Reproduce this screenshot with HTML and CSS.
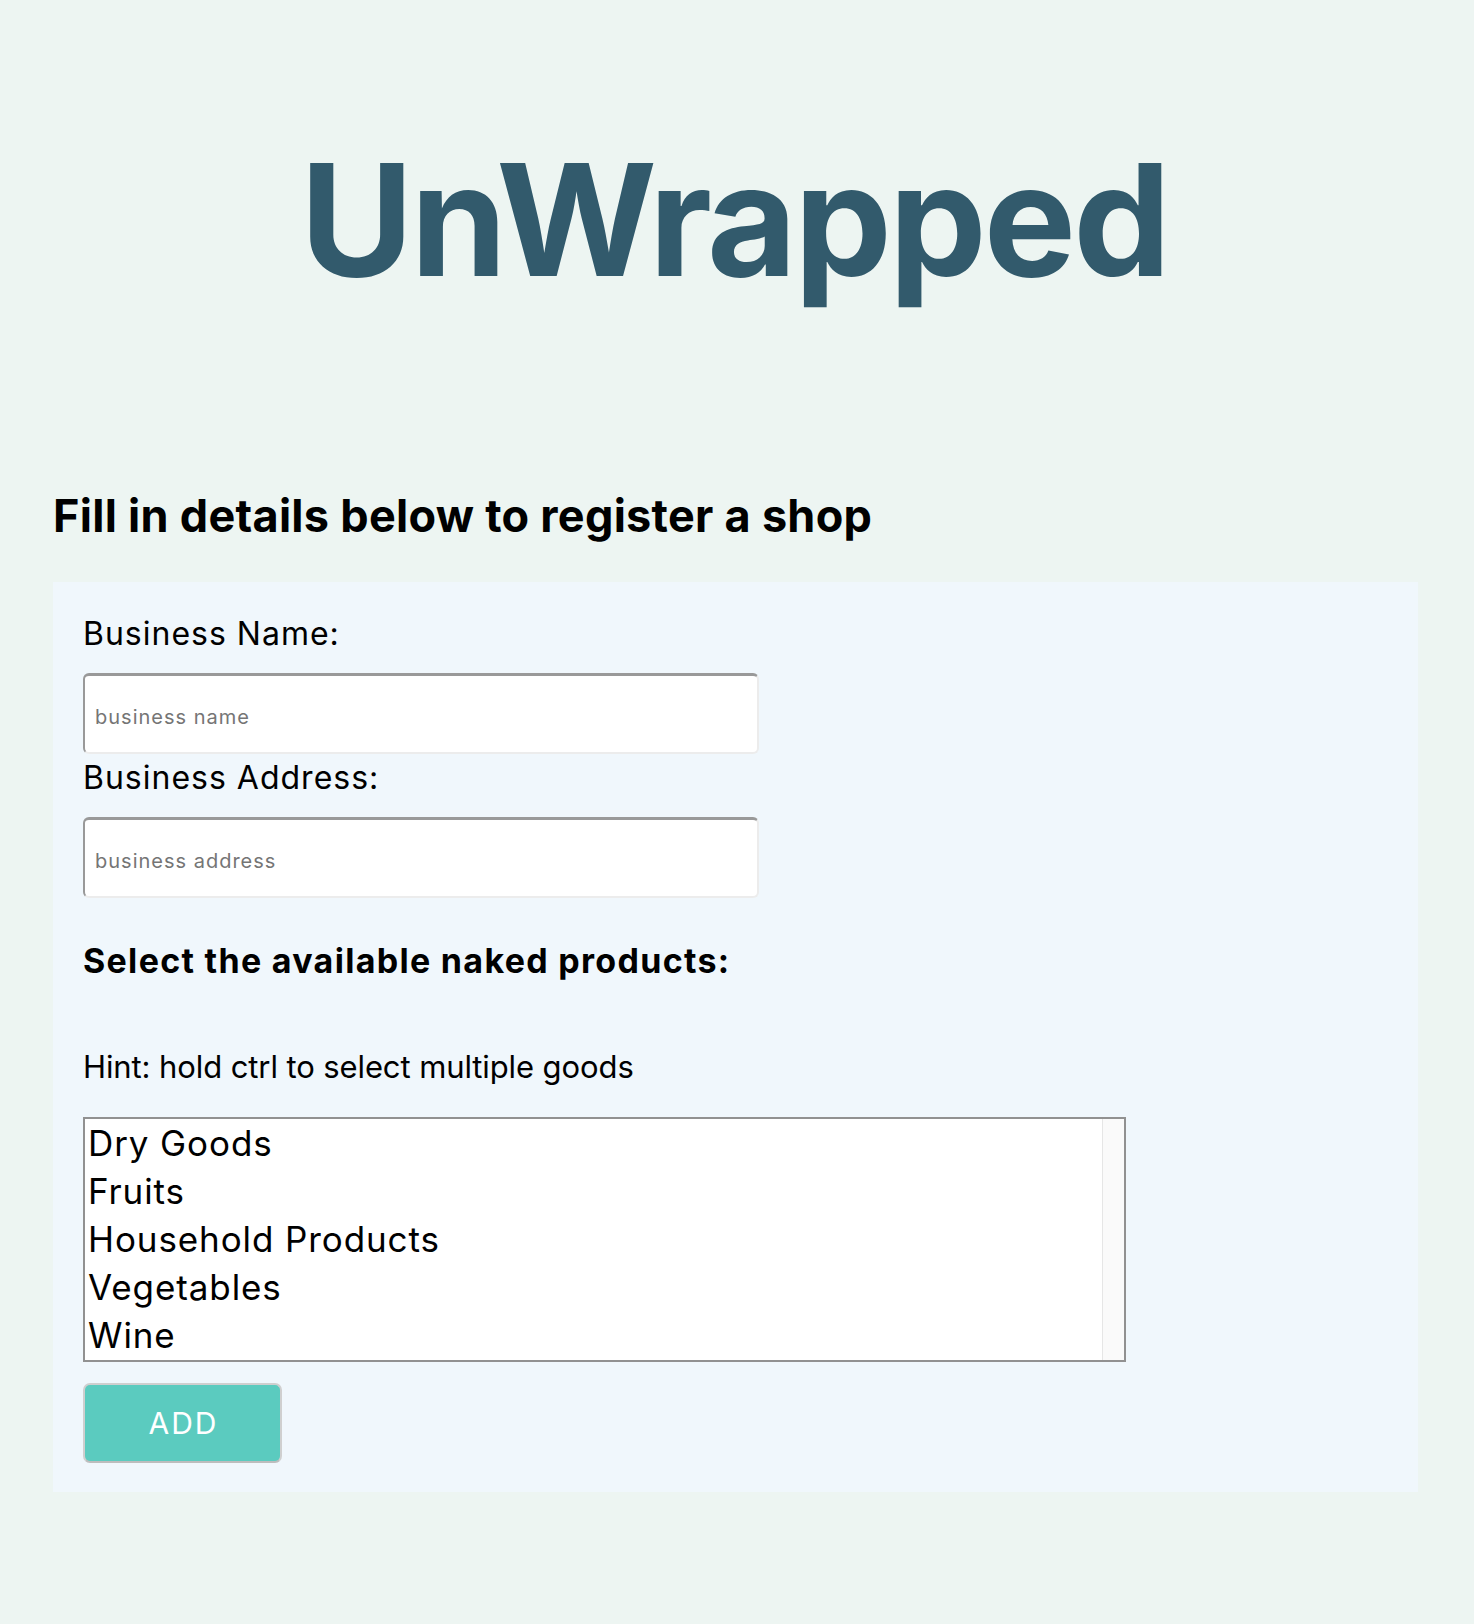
FILE: index.html
```html
<!DOCTYPE html>
<html lang="en">
<head>
<meta charset="utf-8">
<title>UnWrapped</title>
<link rel="stylesheet" href="styles.css">
</head>
<body>
<header class="site-header">
  <h1 class="brand">UnWrapped</h1>
</header>
<main class="page">
  <h2 class="page-title">Fill in details below to register a shop</h2>
  <form class="shop-form">
    <label class="field-label" for="bname">Business Name:</label>
    <input class="text-input" id="bname" type="text" placeholder="business name">
    <label class="field-label field-label--tight" for="baddr">Business Address:</label>
    <input class="text-input" id="baddr" type="text" placeholder="business address">
    <h3 class="section-title">Select the available naked products:</h3>
    <p class="hint">Hint: hold ctrl to select multiple goods</p>
    <select class="product-list" multiple size="5">
      <option>Dry Goods</option>
      <option>Fruits</option>
      <option>Household Products</option>
      <option>Vegetables</option>
      <option>Wine</option>
    </select>
    <button class="add-btn" type="button">ADD</button>
  </form>
</main>
</body>
</html>
```
FILE: styles.css
```css
html, body {
  margin: 0;
  padding: 0;
}
body {
  background: #edf5f2;
  font-family: Inter, "Noto Sans", sans-serif;
  color: #000;
}
.site-header {
  padding: 142px 6px 0 0;
}
.brand {
  margin: 0;
  text-align: center;
  font-size: 155px;
  line-height: 1;
  font-weight: 700;
  color: #325a6c;
  letter-spacing: -2.9px;
}
.page {
  padding: 196px 56px 0 53px;
}
.page-title {
  margin: 0 0 44px;
  font-size: 45px;
  line-height: 1;
  font-weight: 700;
  letter-spacing: 0.28px;
}
.shop-form {
  background: #f0f7fc;
  padding: 36px 30px 29px 30px;
  display: flex;
  flex-direction: column;
  align-items: flex-start;
}
.field-label {
  display: block;
  font-size: 32px;
  line-height: 1;
  letter-spacing: 1px;
  margin-bottom: 23px;
}
.field-label--tight {
  margin-top: 8px;
}
.text-input {
  box-sizing: border-box;
  width: 676px;
  height: 81px;
  margin: 0;
  padding: 6px 10px 0;
  background: #fff;
  border-style: solid;
  border-width: 3px 2px 2px 2px;
  border-color: #999 #ececec #ececec #999;
  border-radius: 6px;
  font-family: Inter, "Noto Sans", sans-serif;
  font-size: 20px;
  letter-spacing: 1px;
  color: #000;
  outline: none;
}
.text-input::placeholder {
  color: #757575;
}
.section-title {
  margin: 46px 0 0;
  font-size: 34px;
  line-height: 1;
  font-weight: 700;
  letter-spacing: 1.3px;
}
.hint {
  margin: 73px 0 0;
  font-size: 31px;
  line-height: 1;
  letter-spacing: -0.1px;
}
.product-list {
  box-sizing: border-box;
  margin: 35px 0 0;
  width: 1043px;
  height: 245px;
  padding: 0;
  border: 2px solid #919191;
  border-radius: 0;
  background: linear-gradient(to right, #fff 0, #fff calc(100% - 22px), #e6e6e6 calc(100% - 22px), #e6e6e6 calc(100% - 21px), #fafafa calc(100% - 21px), #fafafa 100%);
  font-family: Inter, "Noto Sans", sans-serif;
  font-size: 35px;
  letter-spacing: 0.9px;
  color: #000;
  overflow: hidden;
  outline: none;
}
.product-list option {
  padding: 3px 3px;
  color: #000;
  background: transparent;
}
.add-btn {
  box-sizing: border-box;
  margin-top: 21px;
  width: 199px;
  height: 80px;
  background: #5bcbbf;
  border: 2px solid #cfcfcf;
  border-bottom-color: #bdbdbd;
  border-radius: 7px;
  color: #fff;
  font-family: Inter, "Noto Sans", sans-serif;
  font-size: 30px;
  letter-spacing: 2px;
  padding: 0 0 0 2px;
  cursor: pointer;
}
```
